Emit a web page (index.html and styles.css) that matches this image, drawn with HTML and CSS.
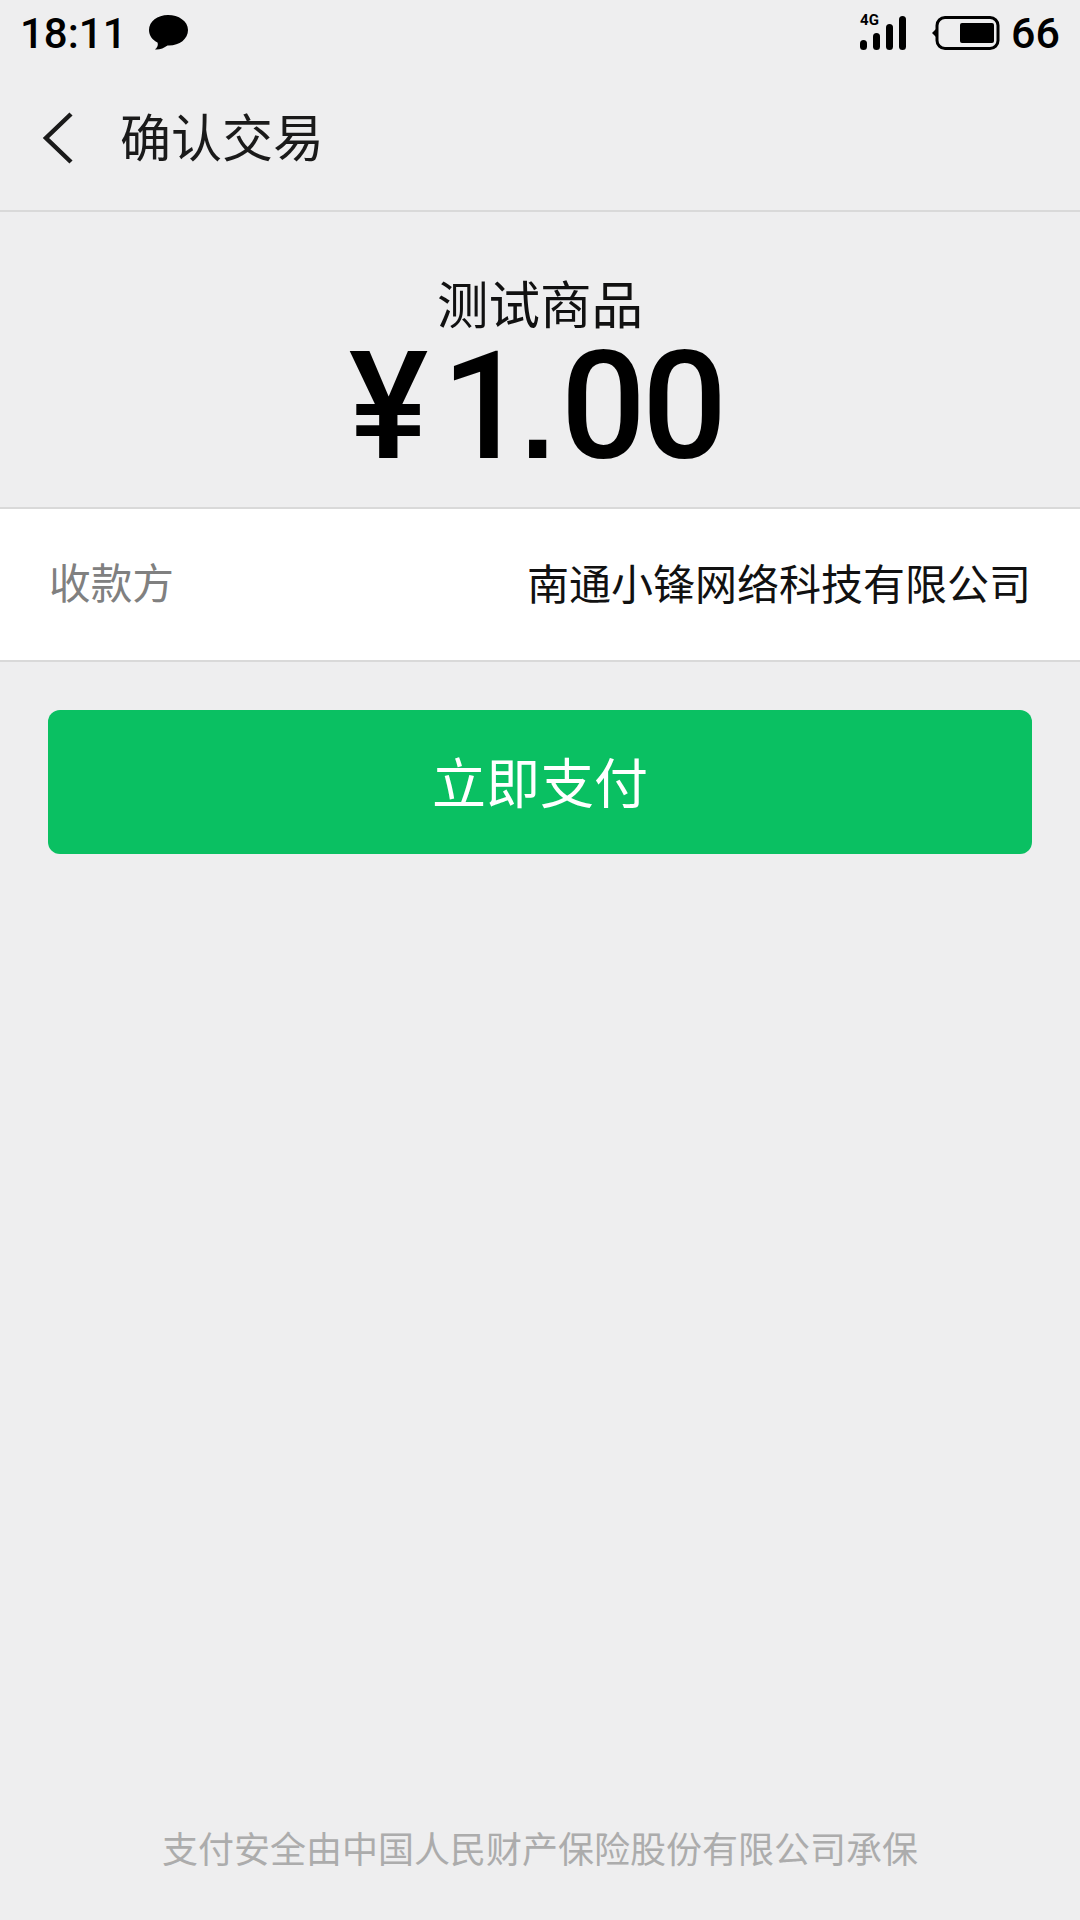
FILE: index.html
```html
<!DOCTYPE html>
<html lang="zh-CN">
<head>
    <meta charset="UTF-8">
    <meta name="viewport" content="width=device-width, initial-scale=1.0">
    <title>确认交易</title>
    <link rel="stylesheet" href="styles.css">
</head>
<body>
    <div class="status-bar">
        <div class="status-left">
            <span class="time">18:11</span>
            <svg class="chat-icon" width="40" height="38" viewBox="0 0 40 38">
                <path d="M20 1C9.500 1 1 7.500 1 16c0 5.500 3.500 10 8.500 12.500 1 2.500-.5 5.500-2.500 7 4.500.5 9-1.500 12.500-4 .5 0 1 0 1.500 0 10.500 0 19-6.500 19-15.500S30.500 1 20 1z" fill="#000"/>
            </svg>
        </div>
        <div class="status-right">
            <div class="signal">
                <span class="signal-label">4G</span>
                <svg width="46" height="34" viewBox="0 0 46 34">
                    <rect x="0" y="24" width="7" height="10" rx="3.500"/>
                    <rect x="13" y="17" width="7" height="17" rx="3.500"/>
                    <rect x="26" y="8" width="7" height="26" rx="3.500"/>
                    <rect x="39" y="0" width="7" height="34" rx="3.500"/>
                </svg>
            </div>
            <svg class="battery" width="68" height="34" viewBox="0 0 68 34">
                <path d="M0 17l5-5v10z" fill="#000"/>
                <rect x="5" y="1.500" width="61" height="31" rx="8" fill="none" stroke="#000" stroke-width="3"/>
                <rect x="28" y="7" width="34" height="20" rx="2" fill="#000"/>
            </svg>
            <span class="battery-level">66</span>
        </div>
    </div>

    <div class="header">
        <svg class="back-icon" width="32" height="52" viewBox="0 0 32 52">
            <path d="M29 2L4 26l25 24" fill="none" stroke="#1a1a1a" stroke-width="4.500"/>
        </svg>
        <div class="header-title">确认交易</div>
    </div>

    <div class="summary">
        <div class="product-name">测试商品</div>
        <div class="amount"><span class="yen">¥</span><span class="whole">1</span><span class="dot">.</span><span class="cents">00</span></div>
    </div>

    <div class="payee-row">
        <span class="payee-label">收款方</span>
        <span class="payee-name">南通小锋网络科技有限公司</span>
    </div>

    <div class="pay-wrap">
        <button class="pay-button">立即支付</button>
    </div>

    <div class="footer">支付安全由中国人民财产保险股份有限公司承保</div>
</body>
</html>
```

FILE: styles.css
```css
body {
    font-family: "Noto Sans CJK SC", Roboto, sans-serif;
    background-color: #eeeeef;
    color: #000;
    display: flex;
    flex-direction: column;
    height: 1920px;
    margin: 0;
    overflow: hidden;
}
.status-bar {
    display: flex;
    justify-content: space-between;
    align-items: center;
    height: 66px;
    padding: 0 20px;
}
.status-left {
    display: flex;
    align-items: center;
    gap: 21px;
}
.time {
    font-family: Roboto, sans-serif;
    font-size: 42px;
    font-weight: 500;
}
.status-right {
    display: flex;
    align-items: center;
}
.signal {
    position: relative;
    display: flex;
    margin-right: 26px;
}
.signal-label {
    position: absolute;
    left: 0;
    top: -5px;
    font-family: Roboto, sans-serif;
    font-size: 15px;
    font-weight: 700;
    line-height: 18px;
}
.battery-level {
    font-family: Roboto, sans-serif;
    font-size: 43px;
    font-weight: 500;
    margin-left: 11px;
}
.header {
    display: flex;
    align-items: center;
    height: 144px;
    padding-left: 42px;
    border-bottom: 2px solid #d9d9d9;
}
.back-icon {
    margin-right: 46px;
}
.header-title {
    font-size: 51px;
    margin-bottom: 6px;
    color: #1a1a1a;
}
.summary {
    display: flex;
    flex-direction: column;
    align-items: center;
    height: 295px;
}
.product-name {
    font-size: 51.500px;
    line-height: 56px;
    margin-top: 62px;
    color: #111;
}
.amount {
    font-family: Roboto, sans-serif;
    font-size: 150px;
    font-weight: 500;
    line-height: 124px;
    margin-top: 15px;
    margin-right: 8px;
}
.yen {
    margin-right: 13px;
}
.whole {
    letter-spacing: -6px;
}
.dot {
    font-family: "Liberation Sans", sans-serif;
    font-size: 122px;
    font-weight: 700;
    margin-right: 6px;
}
.cents {
    letter-spacing: -4px;
}
.payee-row {
    display: flex;
    justify-content: space-between;
    align-items: center;
    height: 151px;
    padding: 0 49px;
    background: #fff;
    border-top: 2px solid #d9d9d9;
    border-bottom: 2px solid #d9d9d9;
}
.payee-label {
    font-size: 41.700px;
    margin-bottom: 7px;
    color: #808080;
}
.payee-name {
    font-size: 42px;
    margin-bottom: 7px;
    color: #111;
}
.pay-wrap {
    padding: 48px 48px 0;
}
.pay-button {
    display: block;
    width: 100%;
    height: 144px;
    padding: 0 0 4px;
    font-family: inherit;
    font-size: 54px;
    color: #fff;
    background: #0ac062;
    border: none;
    border-radius: 12px;
}
.footer {
    margin-top: auto;
    margin-bottom: 48px;
    text-align: center;
    font-size: 36px;
    line-height: 50px;
    color: #acacac;
}
```
